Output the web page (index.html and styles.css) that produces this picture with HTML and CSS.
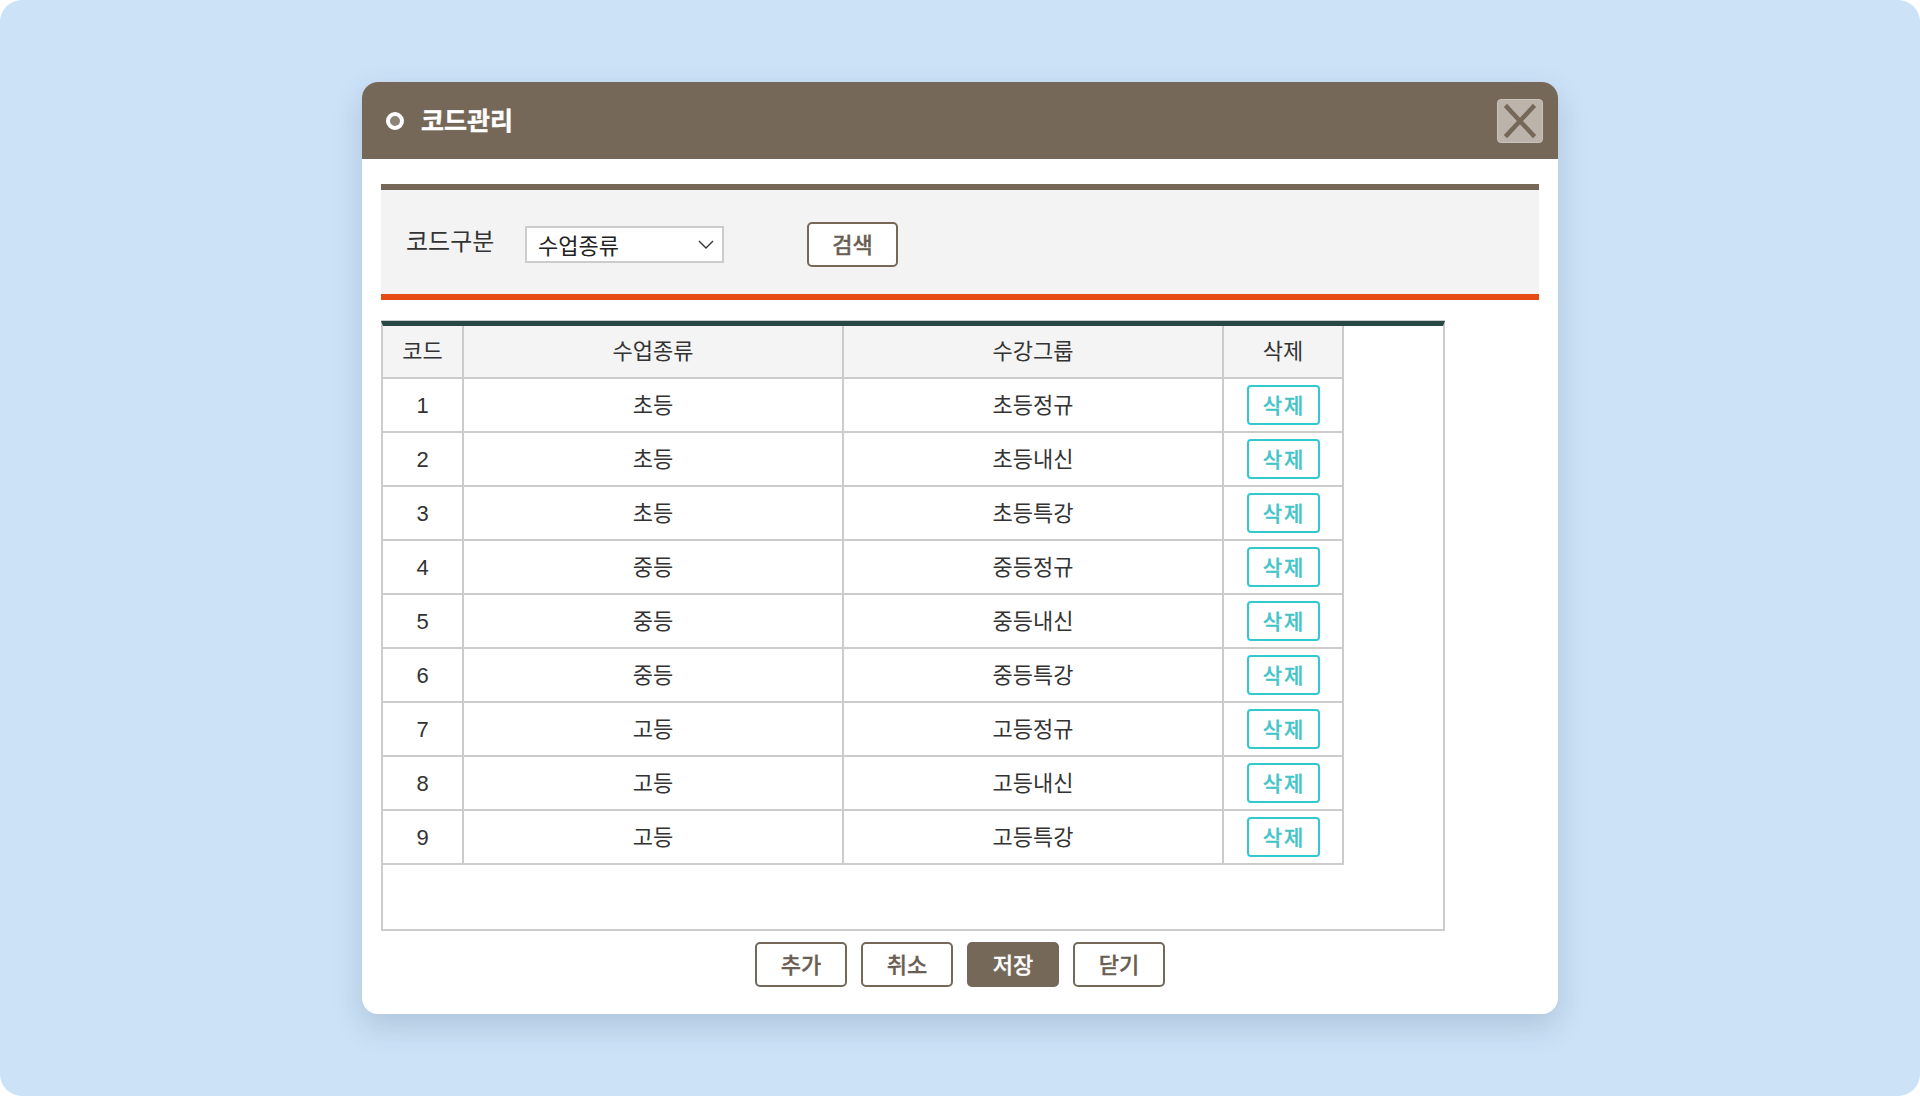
FILE: index.html
```html
<!DOCTYPE html>
<html lang="ko">
<head>
<meta charset="utf-8">
<title>코드관리</title>
<link rel="stylesheet" href="styles.css">
</head>
<body>
<div class="stage">
  <div class="dialog">
    <div class="dialog-header">
      <span class="title-dot"></span>
      <h1 class="title">코드관리</h1>
      <button class="close-btn" aria-label="닫기">
        <svg width="46" height="44" viewBox="0 0 46 44"><path d="M10 8 L36 36 M36 8 L10 36" stroke="#756858" stroke-width="4.5" stroke-linecap="square"/></svg>
      </button>
    </div>
    <div class="dialog-body">
      <div class="search-box">
        <span class="search-label">코드구분</span>
        <div class="select">
          <span>수업종류</span>
          <svg width="16" height="9" viewBox="0 0 16 9"><path d="M1 1 L8 8 L15 1" fill="none" stroke="#333" stroke-width="1.4"/></svg>
        </div>
        <button class="btn search-btn">검색</button>
      </div>
      <div class="grid-wrap">
        <table class="grid">
          <thead>
            <tr><th class="c1">코드</th><th class="c2">수업종류</th><th class="c3">수강그룹</th><th class="c4">삭제</th></tr>
          </thead>
          <tbody>
            <tr><td class="num">1</td><td>초등</td><td>초등정규</td><td class="act"><button class="del-btn">삭제</button></td></tr>
            <tr><td class="num">2</td><td>초등</td><td>초등내신</td><td class="act"><button class="del-btn">삭제</button></td></tr>
            <tr><td class="num">3</td><td>초등</td><td>초등특강</td><td class="act"><button class="del-btn">삭제</button></td></tr>
            <tr><td class="num">4</td><td>중등</td><td>중등정규</td><td class="act"><button class="del-btn">삭제</button></td></tr>
            <tr><td class="num">5</td><td>중등</td><td>중등내신</td><td class="act"><button class="del-btn">삭제</button></td></tr>
            <tr><td class="num">6</td><td>중등</td><td>중등특강</td><td class="act"><button class="del-btn">삭제</button></td></tr>
            <tr><td class="num">7</td><td>고등</td><td>고등정규</td><td class="act"><button class="del-btn">삭제</button></td></tr>
            <tr><td class="num">8</td><td>고등</td><td>고등내신</td><td class="act"><button class="del-btn">삭제</button></td></tr>
            <tr><td class="num">9</td><td>고등</td><td>고등특강</td><td class="act"><button class="del-btn">삭제</button></td></tr>
          </tbody>
        </table>
      </div>
      <div class="actions">
        <button class="btn">추가</button>
        <button class="btn">취소</button>
        <button class="btn primary">저장</button>
        <button class="btn">닫기</button>
      </div>
    </div>
  </div>
</div>
</body>
</html>
```

FILE: styles.css
```css
* { box-sizing: border-box; }
html, body { margin: 0; padding: 0; background: #ffffff; }
body {
  font-family: "Noto Sans CJK KR", "Noto Sans", sans-serif;
  color: #333;
}
.stage {
  width: 1920px;
  height: 1096px;
  background: #cce2f7;
  border-radius: 22px;
  display: flex;
  align-items: center;
  justify-content: center;
}
.dialog {
  width: 1196px;
  height: 932px;
  background: #fff;
  border-radius: 16px;
  box-shadow: 0 12px 30px rgba(40, 60, 90, 0.18);
  display: flex;
  flex-direction: column;
  overflow: hidden;
}
.dialog-header {
  height: 77px;
  background: #756858;
  display: flex;
  align-items: center;
  padding: 0 15px 0 24px;
  flex: none;
}
.title-dot {
  width: 18px;
  height: 18px;
  border-radius: 50%;
  border: 4px solid #fff;
  background: #8e8378;
  flex: none;
}
.title {
  margin: 0 0 2px 17px;
  font-size: 25px;
  font-weight: 700;
  color: #fff;
  flex: 1;
  line-height: 1;
  -webkit-text-stroke: 0.4px #fff;
}
.close-btn {
  width: 46px;
  height: 44px;
  padding: 0;
  margin-top: 1px;
  border: 1px solid #cbc4bc;
  border-radius: 4px;
  background: #bcb4ab;
  display: block;
}
.close-btn svg { display: block; margin: -1px; }
.dialog-body {
  padding: 25px 19px 0;
  display: flex;
  flex-direction: column;
}
.search-box {
  height: 116px;
  background: #f3f3f3;
  border-top: 6px solid #756858;
  border-bottom: 6px solid #e84a16;
  display: flex;
  align-items: center;
  padding: 0 0 0 25px;
}
.search-label {
  font-size: 24px;
  color: #333;
  margin-top: -5px;
  width: 94px;
}
.select {
  margin-left: 25px;
  width: 199px;
  height: 37px;
  background: #fff;
  border: 2px solid #cccccc;
  display: flex;
  align-items: center;
  justify-content: space-between;
  padding: 0 8px 2px 11px;
  font-size: 22px;
  color: #222;
  margin-top: 5px;
}
.select svg { margin-top: 2px; }
.btn {
  width: 92px;
  height: 45px;
  background: #fff;
  border: 2px solid #756858;
  border-radius: 5px;
  font-family: inherit;
  font-size: 22px;
  font-weight: 500;
  color: #6a5e53;
  padding: 0 0 4px;
  -webkit-text-stroke: 0.3px #6a5e53;
}
.search-btn {
  margin-left: 83px;
  width: 91px;
  margin-top: 5px;
}
.grid-wrap {
  margin-top: 21px;
  width: 1064px;
  height: 610px;
  border: 2px solid #cccccc;
  border-top: 5px solid #284846;
  box-shadow: 0 -1px 0 #cccccc;
}
.grid {
  border-collapse: collapse;
  table-layout: fixed;
  width: 960px;
}
.grid th, .grid td {
  border-right: 2px solid #cccccc;
  border-bottom: 2px solid #cccccc;
  text-align: center;
  font-size: 22px;
  font-weight: 400;
  color: #333;
  padding: 0 0 5px;
}
.grid td.num {
  font-family: "Liberation Sans", Arial, sans-serif;
  padding: 1px 0 0;
}
.grid td.act { padding: 0; }
.grid th {
  height: 52px;
  background: #f4f4f4;
}
.grid td { height: 54px; }
.c1 { width: 80px; }
.c2 { width: 380px; }
.c3 { width: 380px; }
.c4 { width: 120px; }
.del-btn {
  display: block;
  margin: 0 auto;
  width: 73px;
  height: 40px;
  background: #fff;
  border: 2px solid #33c8cc;
  border-radius: 4px;
  color: #45c4c8;
  font-family: inherit;
  font-size: 21px;
  font-weight: 500;
  letter-spacing: 2px;
  padding: 0 0 3px 2px;
  -webkit-text-stroke: 0.3px #45c4c8;
}
.actions {
  margin-top: 11px;
  display: flex;
  justify-content: center;
  gap: 14px;
}
.btn.primary {
  background: #756858;
  color: #fff;
  -webkit-text-stroke: 0.3px #fff;
}
```
